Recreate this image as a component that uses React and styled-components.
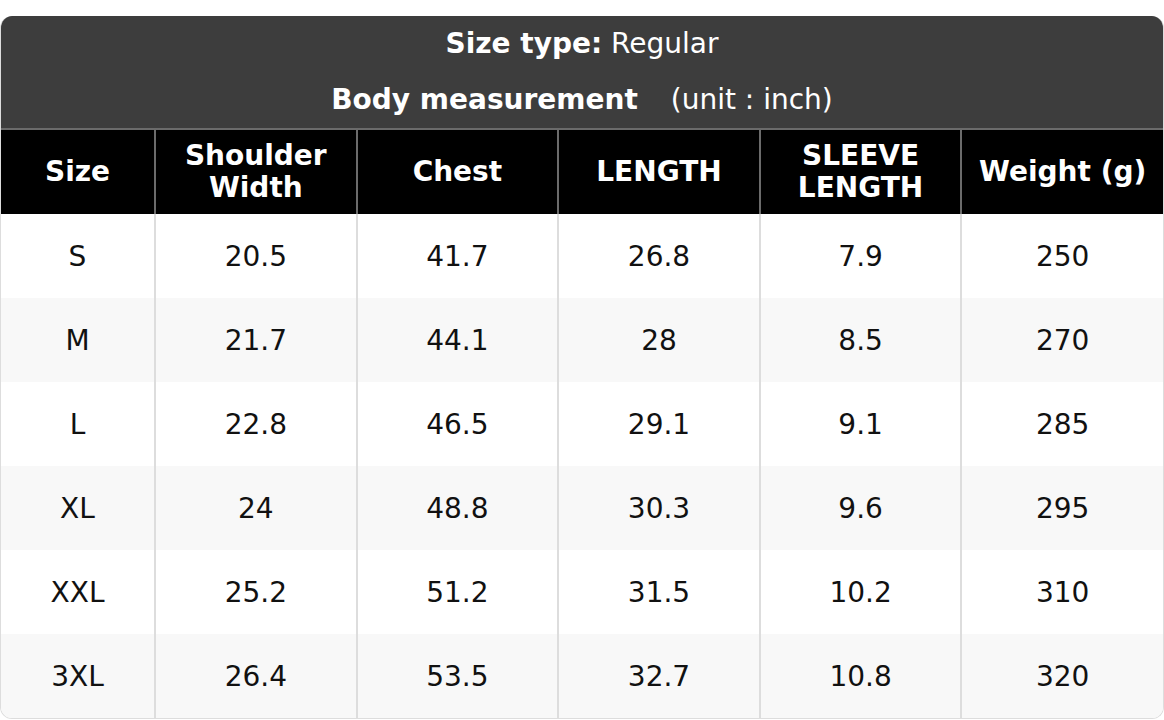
import styled, { createGlobalStyle } from "styled-components";

const GlobalStyle = createGlobalStyle`
  body {
    margin: 0;
    background: #ffffff;
    font-family: "DejaVu Sans", "Liberation Sans", sans-serif;
  }
`;

const Page = styled.div`
  padding-top: 16px;
`;

const Card = styled.div`
  border: 1px solid #dddddd;
  border-top: none;
  border-radius: 12px;
  overflow: hidden;
`;

const Caption = styled.div`
  background: #3d3d3d;
  color: #ffffff;
  text-align: center;
  font-size: 28px;
  border-bottom: 2px solid #6b6b6b;
  margin: 0 -1px;
`;

const CaptionLine = styled.div`
  height: 56px;
  line-height: 56px;
`;

const Label = styled.b`
  font-weight: 700;
  margin-right: ${(p) => p.$gap || 0}px;
`;

const Table = styled.table`
  width: 100%;
  border-collapse: collapse;
  table-layout: fixed;
  font-size: 28px;
`;

const HeadCell = styled.th`
  background: #000000;
  color: #ffffff;
  font-weight: 700;
  height: 84px;
  padding: 0 4px;
  line-height: 32px;
  text-align: center;
  vertical-align: middle;
  border-left: 2px solid #6b6b6b;

  &:first-child {
    border-left: none;
  }
`;

const Row = styled.tr`
  background: ${(p) => (p.$alt ? "#f8f8f8" : "#ffffff")};
`;

const Cell = styled.td`
  height: 84px;
  padding: 0;
  text-align: center;
  vertical-align: middle;
  color: #111111;
  border-left: 2px solid #dddddd;

  &:first-child {
    border-left: none;
  }
`;

const columns = [
  "Size",
  ["Shoulder", "Width"],
  "Chest",
  "LENGTH",
  ["SLEEVE", "LENGTH"],
  "Weight (g)",
];

const rows = [
  ["S", "20.5", "41.7", "26.8", "7.9", "250"],
  ["M", "21.7", "44.1", "28", "8.5", "270"],
  ["L", "22.8", "46.5", "29.1", "9.1", "285"],
  ["XL", "24", "48.8", "30.3", "9.6", "295"],
  ["XXL", "25.2", "51.2", "31.5", "10.2", "310"],
  ["3XL", "26.4", "53.5", "32.7", "10.8", "320"],
];

function HeadLabel({ label }) {
  if (Array.isArray(label)) {
    return (
      <>
        {label[0]}
        <br />
        {label[1]}
      </>
    );
  }
  return label;
}

export default function App() {
  return (
    <>
      <GlobalStyle />
      <Page>
        <Card>
          <Caption>
            <CaptionLine>
              <Label>Size type:</Label> Regular
            </CaptionLine>
            <CaptionLine>
              <Label $gap={24}>Body measurement</Label> (unit : inch)
            </CaptionLine>
          </Caption>
          <Table>
            <colgroup>
              <col style={{ width: 154 }} />
              <col />
              <col />
              <col />
              <col />
              <col />
            </colgroup>
            <thead>
              <tr>
                {columns.map((c, i) => (
                  <HeadCell key={i}>
                    <HeadLabel label={c} />
                  </HeadCell>
                ))}
              </tr>
            </thead>
            <tbody>
              {rows.map((r, i) => (
                <Row key={r[0]} $alt={i % 2 === 1}>
                  {r.map((v, j) => (
                    <Cell key={j}>{v}</Cell>
                  ))}
                </Row>
              ))}
            </tbody>
          </Table>
        </Card>
      </Page>
    </>
  );
}
